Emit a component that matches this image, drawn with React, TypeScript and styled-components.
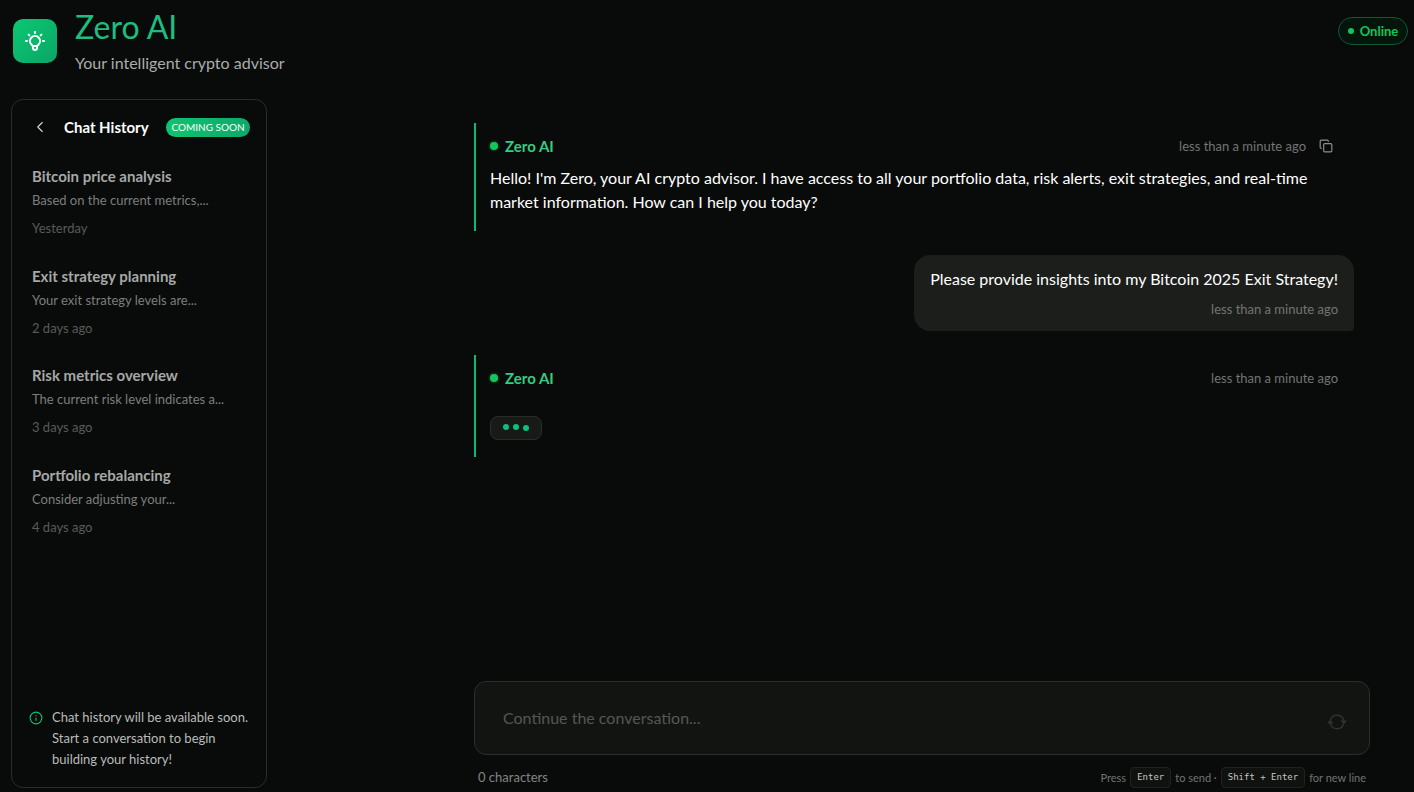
import React, { useState } from "react";
import styled, { createGlobalStyle, css } from "styled-components";
import { ChevronLeft, Copy, Info } from "lucide-react";

const GlobalStyle = createGlobalStyle`
  * { box-sizing: border-box; }
  body {
    margin: 0;
    background: #090b0a;
    color: #fff;
    font-family: Lato, "Open Sans", sans-serif;
    font-size: 16px;
    line-height: 24px;
  }
  h1, h2, h3, p, ul { margin: 0; padding: 0; }
  button, textarea { font: inherit; color: inherit; background: none; border: 0; padding: 0; }
`;

const Page = styled.div`
  min-height: 100vh;
  display: flex;
  flex-direction: column;
  padding: 7px 6px 4px 11px;
`;

const Header = styled.header`
  display: flex;
  align-items: flex-start;
  gap: 18px;
  height: 92px;
  padding-left: 2px;
`;

const Logo = styled.div`
  display: grid;
  place-items: center;
  width: 44px;
  height: 44px;
  margin-top: 12px;
  border-radius: 10px;
  background: linear-gradient(135deg, #0bc873, #0ba566);
`;

const Brand = styled.div`
  flex: 1;
`;

const Title = styled.h1`
  font-size: 32px;
  line-height: 40px;
  font-weight: 400;
  color: #1ebd80;
`;

const Tagline = styled.p`
  font-size: 16px;
  line-height: 32px;
  color: #a9adab;
`;

const Status = styled.div`
  display: flex;
  align-items: center;
  justify-content: center;
  gap: 6px;
  width: 70px;
  height: 28px;
  margin-top: 10px;
  border: 1px solid #0c5a36;
  border-radius: 14px;
  background: #04150c;
  color: #13c65c;
  font-size: 13px;
  font-weight: 700;
`;

const Dot = styled.span<{ $size: number; $glow?: boolean }>`
  flex: none;
  width: ${(p) => p.$size}px;
  height: ${(p) => p.$size}px;
  border-radius: 50%;
  background: #12c65c;
  ${(p) => p.$glow && css`box-shadow: 0 0 3px #12c65c99;`}
`;

const Body = styled.div`
  flex: 1;
  display: flex;
  justify-content: space-between;
`;

const Sidebar = styled.aside`
  display: flex;
  flex-direction: column;
  width: 256px;
  border: 1px solid #292c2a;
  border-radius: 12px;
  padding: 15px 16px 16px;
`;

const SidebarHead = styled.div`
  display: flex;
  align-items: center;
  height: 24px;
`;

const BackButton = styled.button`
  display: grid;
  place-items: center;
  width: 24px;
  height: 24px;
  margin-right: 12px;
  color: #d5d7d6;
`;

const SidebarTitle = styled.h2`
  flex: 1;
  font-size: 15px;
  font-weight: 700;
  white-space: nowrap;
`;

const Badge = styled.span`
  width: 84px;
  border-radius: 10px;
  background: linear-gradient(90deg, #0fc46e, #0ba96b);
  font-size: 10px;
  line-height: 19px;
  text-align: center;
  white-space: nowrap;
`;

const History = styled.ul`
  flex: 1;
  list-style: none;
  padding: 25px 4px 0;
`;

const HistoryItem = styled.li`
  height: 76px;
  margin-bottom: 24px;
  &:nth-child(even) { margin-bottom: 23px; }
`;

const ItemTitle = styled.h3`
  font-size: 15px;
  line-height: 24px;
  font-weight: 700;
  color: #a6a8a7;
`;

const ItemText = styled.p`
  font-size: 13px;
  line-height: 24px;
  color: #7c7e7d;
`;

const ItemDate = styled.p`
  margin-top: 6px;
  font-size: 13px;
  line-height: 20px;
  color: #585b59;
`;

const Notice = styled.p`
  display: flex;
  gap: 9px;
  padding: 0 0 1px 1px;
  font-size: 13px;
  line-height: 21px;
  color: #b9bcba;
  svg { flex: none; margin-top: 4px; color: #0fbf77; }
`;

const Chat = styled.main`
  flex: 0 1 896px;
  display: flex;
  flex-direction: column;
  margin: 0 38px 0 24px;
`;

const Messages = styled.div`
  flex: 1;
  display: flex;
  flex-direction: column;
  gap: 24px;
  padding: 24px 16px 24px 0;
`;

const Reply = styled.article`
  border-left: 2px solid #0fb873;
  padding: 11px 16px 17px 14px;
`;

const ReplyHead = styled.div`
  display: flex;
  align-items: center;
  margin-bottom: 8px;
`;

const Author = styled.h3`
  flex: 1;
  margin-left: 7px;
  font-size: 15px;
  line-height: 24px;
  font-weight: 700;
  color: #32cd83;
`;

const Time = styled.time`
  font-size: 13px;
  line-height: 20px;
  color: #727573;
`;

const CopyButton = styled.button`
  display: grid;
  place-items: center;
  width: 24px;
  height: 24px;
  margin-left: 8px;
  color: #8d908e;
`;

const Bubble = styled.article`
  align-self: flex-end;
  display: flex;
  flex-direction: column;
  align-items: flex-end;
  gap: 8px;
  padding: 12px 16px;
  border-radius: 16px 16px 4px 16px;
  background: #1c1e1c;
`;

const Typing = styled.div`
  display: flex;
  justify-content: center;
  align-items: flex-start;
  gap: 4px;
  width: 52px;
  height: 24px;
  margin-top: 26px;
  padding-top: 7px;
  border: 1px solid #2a2d2a;
  border-radius: 8px;
  background: #181a18;
`;

const TypingDot = styled.span<{ $low?: boolean }>`
  width: 6px;
  height: 6px;
  margin-top: ${(p) => (p.$low ? 1 : 0)}px;
  border-radius: 50%;
  background: #0fbf7c;
`;

const Composer = styled.form`
  display: flex;
  align-items: center;
  height: 74px;
  padding: 0 22px 0 28px;
  border: 1px solid #2b2e2b;
  border-radius: 12px;
  background: #121412;
`;

const Input = styled.textarea`
  flex: 1;
  height: 24px;
  resize: none;
  outline: none;
  font-size: 16px;
  &::placeholder { color: #545755; opacity: 1; }
`;

const SendButton = styled.button`
  display: grid;
  place-items: center;
  width: 20px;
  height: 20px;
  margin-top: 8px;
  color: #2f322f;
`;

const Hints = styled.div`
  display: flex;
  justify-content: space-between;
  align-items: center;
  height: 21px;
  margin-top: 12px;
  padding: 0 4px;
  font-size: 13px;
  line-height: 19px;
  color: #828583;
`;

const Keys = styled.span`
  display: flex;
  align-items: center;
  gap: 4px;
  font-size: 11px;
  color: #707371;
`;

const Key = styled.kbd`
  padding: 0 6px;
  border: 1px solid #1f2220;
  border-radius: 4px;
  background: #101210;
  color: #c5c8c6;
  font-family: "DejaVu Sans Mono", monospace;
  font-size: 9px;
  line-height: 19px;
`;

const history = [
  { title: "Bitcoin price analysis", text: "Based on the current metrics,...", date: "Yesterday" },
  { title: "Exit strategy planning", text: "Your exit strategy levels are...", date: "2 days ago" },
  { title: "Risk metrics overview", text: "The current risk level indicates a...", date: "3 days ago" },
  { title: "Portfolio rebalancing", text: "Consider adjusting your...", date: "4 days ago" },
];

const BulbIcon = () => (
  <svg width="24" height="24" viewBox="0 0 24 24" fill="none" stroke="#fff" strokeWidth="2" strokeLinecap="round" strokeLinejoin="round" aria-hidden="true">
    <path d="M12 3v1m6.364 1.636l-.707.707M21 12h-1M4 12H3m3.343-5.657l-.707-.707m2.828 9.9a5 5 0 117.072 0l-.548.547A3.374 3.374 0 0014 18.469V19a2 2 0 11-4 0v-.531c0-.895-.356-1.754-.988-2.386l-.548-.547zM9.663 17h4.673" />
  </svg>
);

const SyncIcon = () => (
  <svg width="20" height="20" viewBox="0 0 20 20" fill="none" stroke="currentColor" strokeWidth="1.5" aria-hidden="true">
    <path d="M3.500 8A6.800 6.800 0 0 1 16.700 9M16.500 12A6.800 6.800 0 0 1 3.300 11" />
    <path d="M13.500 8.500h6.500l-3.250 4zM0 11.500h6.500l-3.250-4z" fill="currentColor" stroke="none" />
  </svg>
);

export default function App() {
  const [draft, setDraft] = useState("");
  return (
    <Page>
      <GlobalStyle />
      <Header>
        <Logo><BulbIcon /></Logo>
        <Brand>
          <Title>Zero AI</Title>
          <Tagline>Your intelligent crypto advisor</Tagline>
        </Brand>
        <Status><Dot $size={6} />Online</Status>
      </Header>
      <Body>
        <Sidebar>
          <SidebarHead>
            <BackButton aria-label="Collapse history"><ChevronLeft size={18} strokeWidth={1.5} /></BackButton>
            <SidebarTitle>Chat History</SidebarTitle>
            <Badge>COMING SOON</Badge>
          </SidebarHead>
          <History>
            {history.map((item) => (
              <HistoryItem key={item.title}>
                <ItemTitle>{item.title}</ItemTitle>
                <ItemText>{item.text}</ItemText>
                <ItemDate>{item.date}</ItemDate>
              </HistoryItem>
            ))}
          </History>
          <Notice>
            <Info size={14} />
            <span>Chat history will be available soon. Start a conversation to begin building your history!</span>
          </Notice>
        </Sidebar>
        <Chat>
          <Messages>
            <Reply>
              <ReplyHead>
                <Dot $size={8} $glow />
                <Author>Zero AI</Author>
                <Time>less than a minute ago</Time>
                <CopyButton aria-label="Copy message"><Copy size={14} /></CopyButton>
              </ReplyHead>
              <p>
                Hello! I'm Zero, your AI crypto advisor. I have access to all your portfolio data, risk alerts, exit
                strategies, and real-time market information. How can I help you today?
              </p>
            </Reply>
            <Bubble>
              <p>Please provide insights into my Bitcoin 2025 Exit Strategy!</p>
              <Time>less than a minute ago</Time>
            </Bubble>
            <Reply>
              <ReplyHead>
                <Dot $size={8} $glow />
                <Author>Zero AI</Author>
                <Time>less than a minute ago</Time>
              </ReplyHead>
              <Typing aria-label="Zero AI is typing">
                <TypingDot />
                <TypingDot />
                <TypingDot $low />
              </Typing>
            </Reply>
          </Messages>
          <Composer onSubmit={(e) => e.preventDefault()}>
            <Input
              aria-label="Message"
              rows={1}
              placeholder="Continue the conversation..."
              value={draft}
              onChange={(e) => setDraft(e.target.value)}
            />
            <SendButton aria-label="Send"><SyncIcon /></SendButton>
          </Composer>
          <Hints>
            <span>{draft.length} characters</span>
            <Keys>
              Press <Key>Enter</Key> to send · <Key>Shift + Enter</Key> for new line
            </Keys>
          </Hints>
        </Chat>
      </Body>
    </Page>
  );
}
